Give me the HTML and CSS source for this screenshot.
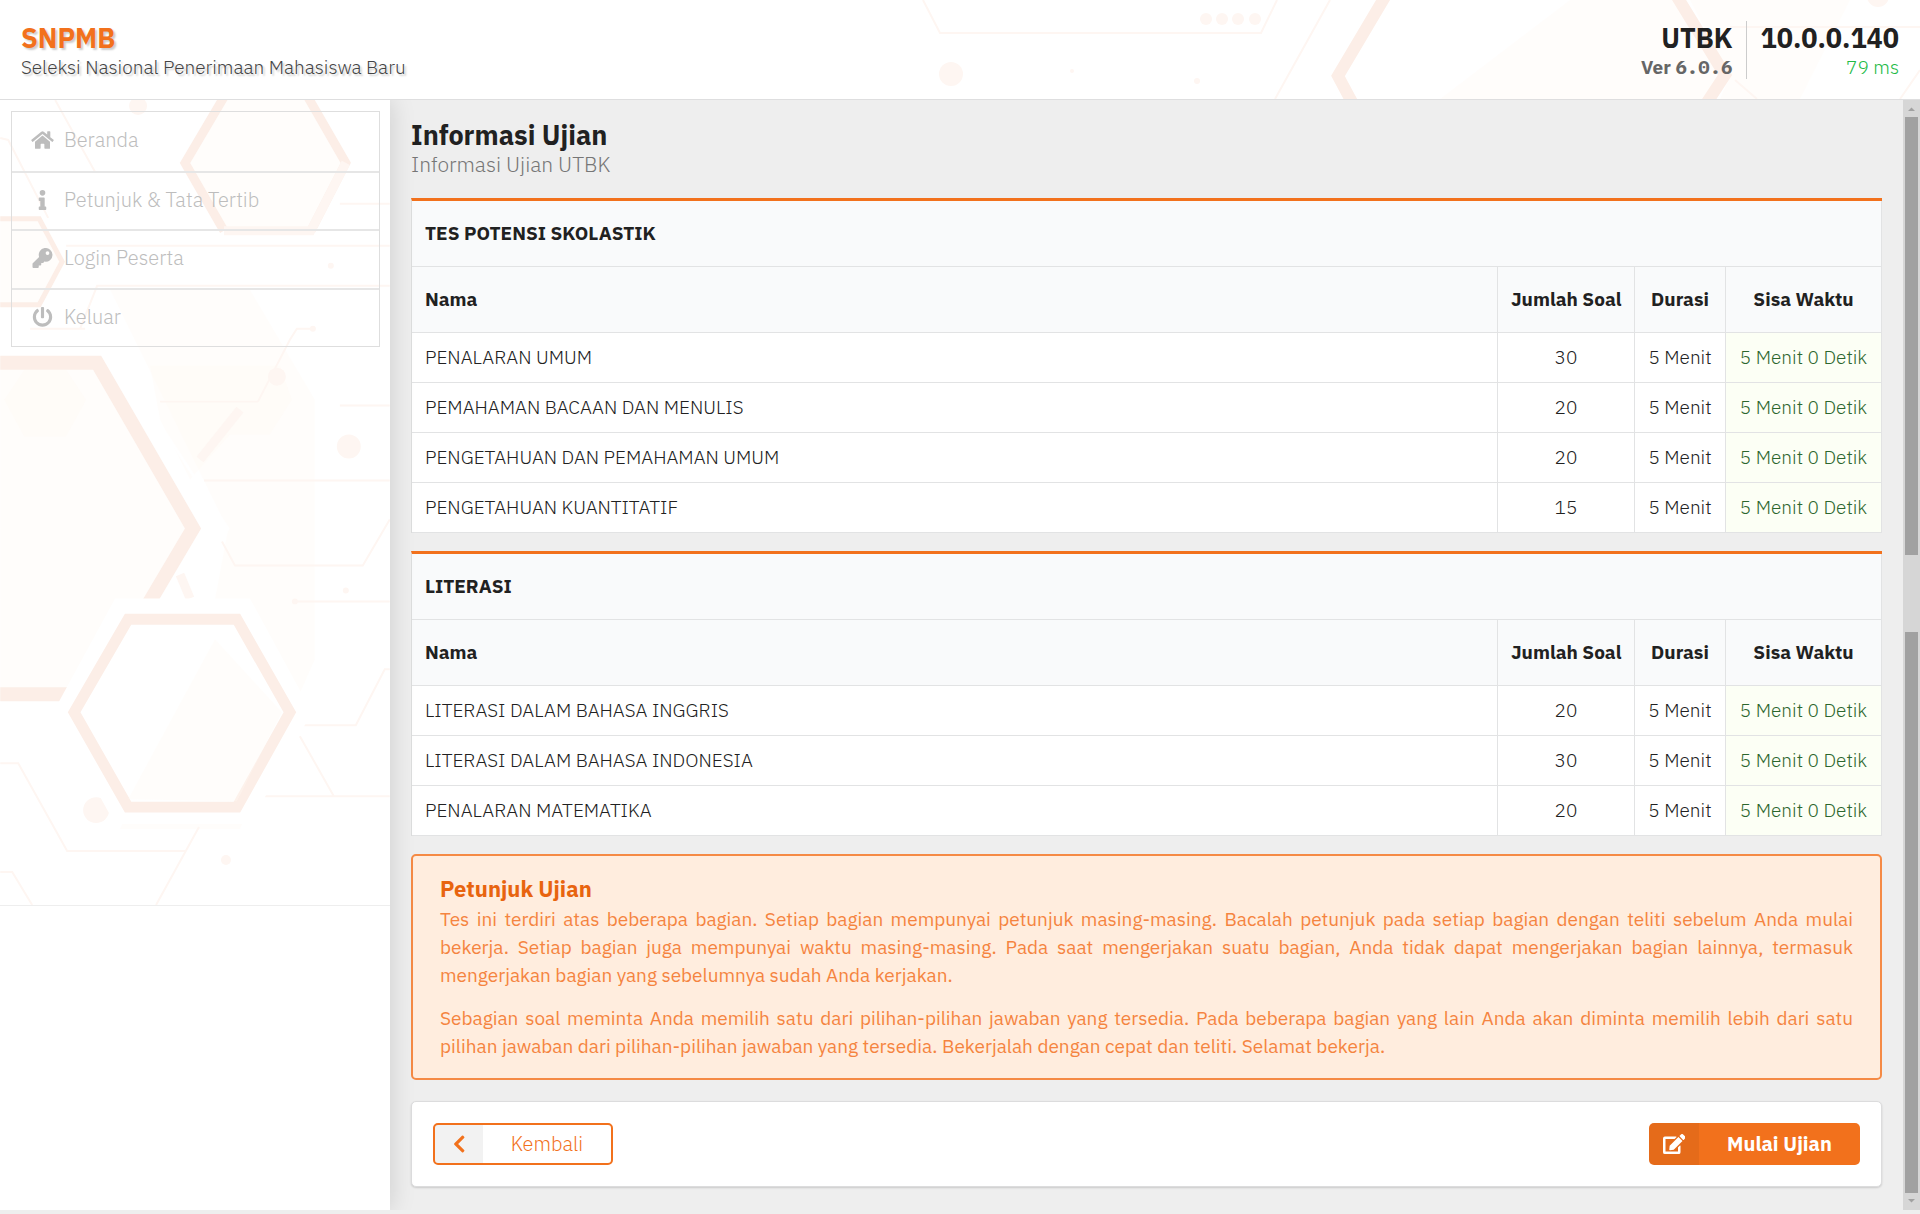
FILE: index.html
```html
<!DOCTYPE html>
<html lang="id">
<head>
<meta charset="utf-8">
<meta name="viewport" content="width=device-width, initial-scale=1">
<title>SNPMB - Informasi Ujian</title>
<link rel="stylesheet" href="styles.css">
</head>
<body>
<header class="topbar">
  <svg class="topbar-art" width="1000" height="99" viewBox="920 0 1000 99" aria-hidden="true">
    <path class="glow" d="M1570 0H1679L1725 76L1710 99H1440Z"/>
    <path class="glow" d="M1690 0H1850L1800 99H1720L1730 76Z"/>
    <path class="band medium" d="M1386 -5L1338 76L1353 104M1676 -5L1725 75L1706 104"/>
    <path class="trace" d="M923 0L940 33H1261L1277 0M1330 0L1275 99M1730 27H1920M1900 99L1920 70M1735 80L1757 99"/>
    <g class="dot"><circle cx="951" cy="74" r="12"/><circle cx="1206" cy="19" r="6"/><circle cx="1222" cy="19" r="6"/><circle cx="1238" cy="19" r="6"/><circle cx="1255" cy="19" r="6"/><circle cx="1878" cy="-4" r="11"/><circle cx="1197" cy="81" r="3"/><circle cx="1072" cy="71" r="2"/></g>
  </svg>
  <div class="brand">
    <h1 class="brand-name">SNPMB</h1>
    <p class="brand-tagline">Seleksi Nasional Penerimaan Mahasiswa Baru</p>
  </div>
  <div class="status">
    <div class="status-block">
      <strong class="status-title">UTBK</strong>
      <span class="version">Ver <span class="version-number">6.0.6</span></span>
    </div>
    <div class="status-block">
      <strong class="status-title">10.0.0.140</strong>
      <span class="ping">79 ms</span>
    </div>
  </div>
</header>

<div class="layout">
  <aside class="sidebar">
    <svg class="sidebar-art" width="390" height="806" viewBox="0 0 390 806" aria-hidden="true">
      <path class="glow" d="M224 0L185 63L225 131H311L347 63L310 0ZM0 119H40L62 162L40 205H0ZM0 263H97L193 429L151 500L95 595H0Z"/>
      <path class="glow" d="M110 190H250L315 300V560L240 730H120L215 500L228 430Z"/>
      <path class="glow" d="M4 300L24 270H66L86 300L66 337H24ZM150 266H280L292 300L270 335H230L190 380L160 320Z"/>
      <path class="edge" d="M100 233L228 429L190 499"/>
      <path class="band" d="M224 -3L185 63L224 131"/>
      <path class="band" d="M308 -3L346 63L311 131"/>
      <path class="band faint" d="M224 131H311L346 63"/>
      <path class="band slim" d="M0 119H39L62 162L39 205H0"/>
      <path class="band wide" d="M0 263H97L193 429L151 500L95 595H0"/>
      <path class="band faint" d="M240 310L200 360M180 475L190 499"/>
      <path class="trace" d="M55 0L95 72H173M0 38L8 40L48 118M66 146H390M340 104H390M80 229L97 186H390M30 229H85M258 302H160M258 302L290 240L297 229H313M340 306H390M204 381H390M222 442L235 466H363L390 420M295 502H390M300 626H356L385 570H390M0 664H18L67 752H186M199 728L156 806M0 773H12L32 806M300 637L334 697M265 697H390"/>
      <g class="dot"><circle cx="138" cy="6" r="9"/><circle cx="331" cy="166" r="3"/><circle cx="313" cy="229" r="3"/><circle cx="277" cy="277" r="9"/><circle cx="349" cy="347" r="12"/><circle cx="346" cy="491" r="3"/><circle cx="96" cy="711" r="13"/><circle cx="226" cy="761" r="5"/><circle cx="295" cy="502" r="3"/></g>
      <path class="plate" d="M115 499H250L312 613L250 725H115L53 613Z"/>
      <path class="band thick" d="M128 520H237L290 613L237 708H128L74 613Z"/>
      <path class="glow" d="M128 700L215 540L282 613L237 702Z"/>
    </svg>
    <nav class="menu" aria-label="Menu utama">
      <a class="menu-item" href="#beranda">
        <svg class="icon" viewBox="0 0 576 512" aria-hidden="true"><path d="M280.400 148.300L96 300.100V464a16 16 0 0 0 16 16l112.100-.3a16 16 0 0 0 15.900-16V368a16 16 0 0 1 16-16h64a16 16 0 0 1 16 16v95.600a16 16 0 0 0 16 16.100l112 .3a16 16 0 0 0 16-16V300L295.700 148.300a12.200 12.200 0 0 0-15.300 0zM571.600 251.500L488 182.600V44a12 12 0 0 0-12-12h-56a12 12 0 0 0-12 12v72.600L318.500 43a48 48 0 0 0-61 0L4.300 251.500a12 12 0 0 0-1.600 16.900l25.500 31a12 12 0 0 0 16.900 1.600L280.400 107.300a12.200 12.200 0 0 1 15.300 0L530.900 301a12 12 0 0 0 16.900-1.600l25.500-31a12 12 0 0 0-1.700-16.900z"/></svg>
        <span>Beranda</span>
      </a>
      <a class="menu-item" href="#petunjuk">
        <svg class="icon" viewBox="0 0 192 512" aria-hidden="true"><path d="M20 424.200h20V279.800H20a20 20 0 0 1-20-20V212a20 20 0 0 1 20-20h112a20 20 0 0 1 20 20v212.200h20a20 20 0 0 1 20 20V492a20 20 0 0 1-20 20H20a20 20 0 0 1-20-20v-47.800a20 20 0 0 1 20-20zM96 0a72 72 0 1 0 0 144A72 72 0 0 0 96 0z"/></svg>
        <span>Petunjuk &amp; Tata Tertib</span>
      </a>
      <a class="menu-item" href="#login">
        <svg class="icon" viewBox="0 0 512 512" aria-hidden="true"><path d="M512 176A176 176 0 0 1 303.300 348.700l-24 27a24 24 0 0 1-18 8H224v40a24 24 0 0 1-24 24h-40v40a24 24 0 0 1-24 24H24a24 24 0 0 1-24-24v-78a24 24 0 0 1 7-17l161.800-161.800A176 176 0 1 1 512 176zM336 128a48 48 0 1 0 96 0 48 48 0 0 0-96 0z"/></svg>
        <span>Login Peserta</span>
      </a>
      <a class="menu-item" href="#keluar">
        <svg class="icon" viewBox="0 0 512 512" aria-hidden="true"><path d="M400 54.100c63 45 104 118.600 104 201.900 0 136.800-110.800 247.700-247.500 248C120 504.300 8.200 393 8 256.400 7.900 173.100 48.900 99.300 111.800 54.200a24 24 0 0 1 35 7.700L162.600 90a24 24 0 0 1-6.600 31A168 168 0 1 0 356 121a24 24 0 0 1-6.500-31l15.800-28.100a24 24 0 0 1 34.700-7.800zM296 264V24a24 24 0 0 0-24-24h-32a24 24 0 0 0-24 24v240a24 24 0 0 0 24 24h32a24 24 0 0 0 24-24z"/></svg>
        <span>Keluar</span>
      </a>
    </nav>
  </aside>

  <main class="content">
    <div class="page-heading">
      <h2 class="page-title">Informasi Ujian</h2>
      <p class="page-subtitle">Informasi Ujian UTBK</p>
    </div>

    <table class="exam">
      <colgroup><col><col class="col-count"><col class="col-duration"><col class="col-left"></colgroup>
      <thead>
        <tr><th colspan="4" scope="colgroup">TES POTENSI SKOLASTIK</th></tr>
        <tr><th scope="col">Nama</th><th scope="col">Jumlah Soal</th><th scope="col">Durasi</th><th scope="col">Sisa Waktu</th></tr>
      </thead>
      <tbody>
        <tr><td>PENALARAN UMUM</td><td>30</td><td>5 Menit</td><td class="left">5 Menit 0 Detik</td></tr>
        <tr><td>PEMAHAMAN BACAAN DAN MENULIS</td><td>20</td><td>5 Menit</td><td class="left">5 Menit 0 Detik</td></tr>
        <tr><td>PENGETAHUAN DAN PEMAHAMAN UMUM</td><td>20</td><td>5 Menit</td><td class="left">5 Menit 0 Detik</td></tr>
        <tr><td>PENGETAHUAN KUANTITATIF</td><td>15</td><td>5 Menit</td><td class="left">5 Menit 0 Detik</td></tr>
      </tbody>
    </table>

    <table class="exam">
      <colgroup><col><col class="col-count"><col class="col-duration"><col class="col-left"></colgroup>
      <thead>
        <tr><th colspan="4" scope="colgroup">LITERASI</th></tr>
        <tr><th scope="col">Nama</th><th scope="col">Jumlah Soal</th><th scope="col">Durasi</th><th scope="col">Sisa Waktu</th></tr>
      </thead>
      <tbody>
        <tr><td>LITERASI DALAM BAHASA INGGRIS</td><td>20</td><td>5 Menit</td><td class="left">5 Menit 0 Detik</td></tr>
        <tr><td>LITERASI DALAM BAHASA INDONESIA</td><td>30</td><td>5 Menit</td><td class="left">5 Menit 0 Detik</td></tr>
        <tr><td>PENALARAN MATEMATIKA</td><td>20</td><td>5 Menit</td><td class="left">5 Menit 0 Detik</td></tr>
      </tbody>
    </table>

    <section class="notice">
      <h3 class="notice-title">Petunjuk Ujian</h3>
      <p>Tes ini terdiri atas beberapa bagian. Setiap bagian mempunyai petunjuk masing-masing. Bacalah petunjuk pada setiap bagian dengan teliti sebelum Anda mulai bekerja. Setiap bagian juga mempunyai waktu masing-masing. Pada saat mengerjakan suatu bagian, Anda tidak dapat mengerjakan bagian lainnya, termasuk mengerjakan bagian yang sebelumnya sudah Anda kerjakan.</p>
      <p>Sebagian soal meminta Anda memilih satu dari pilihan-pilihan jawaban yang tersedia. Pada beberapa bagian yang lain Anda akan diminta memilih lebih dari satu pilihan jawaban dari pilihan-pilihan jawaban yang tersedia. Bekerjalah dengan cepat dan teliti. Selamat bekerja.</p>
    </section>

    <div class="actions">
      <button class="button button-back" type="button">
        <span class="button-icon"><svg class="icon" viewBox="0 0 320 512" aria-hidden="true"><path d="M34.500 239L228.900 44.700a24 24 0 0 1 33.900 0l22.700 22.700a24 24 0 0 1 0 33.900L131.500 256l154 154.800a24 24 0 0 1 0 33.900l-22.700 22.700a24 24 0 0 1-33.900 0L34.500 273a24 24 0 0 1 0-34z"/></svg></span>
        <span class="button-label">Kembali</span>
      </button>
      <button class="button button-start" type="button">
        <span class="button-icon"><svg class="icon" viewBox="0 0 576 512" aria-hidden="true"><path d="M402.600 83.200l90.200 90.200a9.800 9.800 0 0 1 0 13.800L274.400 405.600l-92.800 10.300a19.500 19.500 0 0 1-21.500-21.500l10.300-92.800L388.800 83.200a9.800 9.800 0 0 1 13.800 0zm162-22.900l-48.800-48.800a39.100 39.100 0 0 0-55.200 0l-35.400 35.400a9.800 9.800 0 0 0 0 13.800l90.200 90.200a9.800 9.800 0 0 0 13.800 0l35.400-35.400a39.100 39.100 0 0 0 0-55.200zM384 346.200V448H64V128h229.800a12.300 12.300 0 0 0 8.500-3.500l40-40a12 12 0 0 0-8.500-20.500H48a48 48 0 0 0-48 48v352a48 48 0 0 0 48 48h352a48 48 0 0 0 48-48V306.200a12 12 0 0 0-20.500-8.500l-40 40a12.300 12.300 0 0 0-3.500 8.500z"/></svg></span>
        <span class="button-label">Mulai Ujian</span>
      </button>
    </div>
  </main>

  <div class="scroll-track" aria-hidden="true">
    <svg class="scroll-arrow" viewBox="0 0 17 17"><path d="M5 11L8.500 7.500L12 11Z"/></svg>
    <div class="scroll-thumb"></div>
    <div></div>
    <div class="scroll-thumb"></div>
    <svg class="scroll-arrow" viewBox="0 0 17 17"><path d="M5 6L8.500 9.500L12 6Z"/></svg>
  </div>
</div>
</body>
</html>
```
FILE: styles.css
```css
:root {
  --orange: #f2711c;
  --text: #212121;
  --line: #e2e3e4;
}

* { box-sizing: border-box; }

body {
  margin: 0;
  padding-bottom: 4px;
  min-height: 100vh;
  display: flex;
  flex-direction: column;
  background: #eee;
  color: var(--text);
  font-family: "IBM Plex Sans", Roboto, "Liberation Sans", sans-serif;
  font-size: 19px;
  font-weight: 300;
  line-height: 28px;
}

h1, h2, h3, p { margin: 0; }

.icon { height: 20px; fill: currentColor; display: block; }

/* Background artwork */
.band { fill: none; stroke: #fceee7; stroke-width: 9; }
.slim { stroke-width: 5; }
.thick { stroke-width: 11; }
.medium { stroke-width: 12; }
.wide { stroke-width: 14; }
.faint { stroke: #fef6f2; }
.trace { fill: none; stroke: #fef6f2; stroke-width: 2; }
.edge { fill: none; stroke: #fff; stroke-width: 3; }
.dot { fill: #fef6f2; }
.glow { fill: #fff8f3; fill-opacity: .35; }
.plate { fill: #fff; }

/* Top bar */
.topbar {
  position: relative;
  z-index: 1;
  display: flex;
  justify-content: space-between;
  align-items: center;
  height: 100px;
  padding: 0 21px;
  overflow: hidden;
  background: #fff;
  border-bottom: 1px solid #dededf;
}

.topbar-art { position: absolute; top: 0; right: 0; }

.brand, .status { position: relative; }

.brand { text-shadow: 2px 2px 2px rgba(0, 0, 0, .2); }
.brand-name, .status-title { font-size: 27px; font-weight: 700; line-height: 34px; }
.brand-name { color: var(--orange); }
.brand-tagline, .version, .ping { line-height: 24px; }
.brand-tagline { color: #444; }

.status { display: flex; }
.status-block { display: flex; flex-direction: column; align-items: flex-end; }
.status-block + .status-block { margin-left: 14px; padding-left: 13px; border-left: 1px solid #ccc; }
.version { color: #666; font-weight: 700; }
.version-number { font-family: "IBM Plex Mono", "Liberation Mono", monospace; }
.ping { color: #21ba45; }

/* Layout */
.layout { flex: 1; display: flex; }

.sidebar {
  position: relative;
  flex: 0 0 390px;
  padding: 11px 10px 0 11px;
  background: #fff;
  box-shadow: 0 0 24px rgba(0, 0, 0, .15);
  clip-path: inset(0 -30px 0 0);
}

.sidebar-art { position: absolute; top: 0; left: 0; border-bottom: 1px solid #eee; }

.menu {
  position: relative;
  display: grid;
  grid-auto-rows: 1fr;
  height: 236px;
  border: 1px solid #dedede;
}

.menu-item {
  display: flex;
  align-items: center;
  gap: 10px;
  padding: 0 19px 2px;
  color: #bdbdbd;
  font-size: 20px;
  text-decoration: none;
}
.menu-item + .menu-item { border-top: 2px solid #e6e6e6; }
.menu-item .icon { width: 23px; }

.content {
  flex: 1;
  display: flex;
  flex-direction: column;
  padding: 19px 21px 20px;
}

.page-heading { margin-bottom: 20px; }
.page-title { font-size: 27px; font-weight: 700; line-height: 31px; }
.page-subtitle { color: #767676; font-size: 21px; line-height: 28px; }

/* Exam tables */
.exam {
  width: 100%;
  margin-bottom: 18px;
  table-layout: fixed;
  border-collapse: separate;
  border-spacing: 0;
  border-top: 3px solid var(--orange);
  border-left: 1px solid #dcdddd;
  background: #fff;
}
.col-count { width: 137px; }
.col-duration { width: 91px; }
.col-left { width: 156px; }
.exam th, .exam td {
  height: 50px;
  padding: 0 13px 2px;
  border-right: 1px solid var(--line);
  border-bottom: 1px solid var(--line);
  text-align: center;
  white-space: nowrap;
}
.exam th { height: 66px; background: #f9fafb; font-weight: 700; }
.exam th:first-child, .exam td:first-child { text-align: left; }
.exam .left { background: #fcfff5; color: #2c662d; }

/* Instructions */
.notice {
  margin-bottom: 21px;
  padding: 18px 27px;
  border: 2px solid #f58a45;
  border-radius: 5px;
  background: #ffedde;
  color: #f58440;
  font-size: 19px;
  font-weight: 400;
  text-align: justify;
}
.notice-title { margin-bottom: 1px; color: #e8640f; font-size: 22px; font-weight: 700; line-height: 30px; }
.notice p + p { margin-top: 15px; }

/* Actions */
.actions {
  display: flex;
  justify-content: space-between;
  padding: 21px;
  border: 1px solid #dcdcdd;
  border-radius: 5px;
  background: #fff;
  box-shadow: 0 1px 2px rgba(0, 0, 0, .15);
}
.button {
  display: flex;
  align-items: stretch;
  height: 42px;
  padding: 0;
  overflow: hidden;
  border: 0;
  border-radius: 5px;
  font: inherit;
  font-size: 20px;
}
.button-icon { display: flex; align-items: center; justify-content: center; width: 50px; background: rgba(0, 0, 0, .05); }
.button-label { display: flex; align-items: center; justify-content: center; flex: 1; }
.button-back { width: 180px; border: 2px solid var(--orange); background: #fff; color: var(--orange); }
.button-back .button-icon { width: 48px; }
.button-start { width: 211px; background: var(--orange); color: #fff; font-weight: 700; }

/* Scroll track */
.scroll-track {
  flex: 0 0 17px;
  display: grid;
  grid-template-rows: 17px 438fr 77fr 561fr 17px;
  background: #d6d6d6;
}
.scroll-thumb { margin: 0 2px; background: #a1a1a1; }
.scroll-arrow { width: 17px; height: 17px; fill: #a1a1a1; }
```
